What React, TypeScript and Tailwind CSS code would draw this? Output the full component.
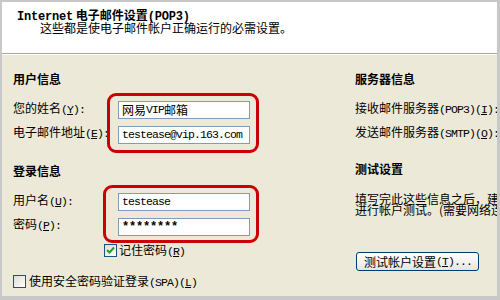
import type { ReactNode } from 'react';

/* Outlook Express 账户向导 — Internet 电子邮件设置 (POP3) */

function A({ children, bold }: { children: ReactNode; bold?: boolean }) {
  return (
    <span
      className={`font-['Liberation_Mono'] ${
        bold ? 'text-[12px] font-bold tracking-[-0.2px]' : 'text-[11.5px] font-normal tracking-[-0.9px]'
      }`}
    >
      {children}
    </span>
  );
}

function Key({ k, colon = true }: { k: string; colon?: boolean }) {
  return (
    <A>
      (<u>{k}</u>){colon ? ':' : ''}
    </A>
  );
}

function Campo({ children }: { children: ReactNode }) {
  return (
    <div className="flex h-[18px] w-[132px] items-center border border-[#7f9db9] bg-white pl-[3px] leading-[12px]">
      {children}
    </div>
  );
}

function Caixa({ marcada }: { marcada?: boolean }) {
  return (
    <span className="flex h-[13px] w-[13px] shrink-0 items-center justify-center border border-[#1c5180] bg-gradient-to-br from-[#dcdcd7] to-white">
      {marcada && (
        <svg width="9" height="9" viewBox="0 0 9 9" aria-hidden>
          <path d="M1 4 L3.5 6.5 L8 1.5" fill="none" stroke="#21a121" strokeWidth="2" />
        </svg>
      )}
    </span>
  );
}

export default function App() {
  return (
    <div className="flex h-[300px] w-[500px] flex-col overflow-hidden border-b-4 border-l-2 border-r-[3px] border-t-2 border-[#c8c8c8] bg-[#ece9d8] font-['Noto_Sans_CJK_SC',sans-serif] text-[12px] leading-[12px] text-black">
      {/* Cabeçalho branco */}
      <header className="h-[52px] shrink-0 border-b border-b-[#aca899] bg-white pl-[15px] pt-[7px] shadow-[0_1px_0_#ffffff]">
        <p className="h-[12px] font-bold">
          <A bold>Internet</A> 电子邮件设置<A bold>(POP3)</A>
        </p>
        <p className="mt-[1px] h-[12px] pl-[23px]">这些都是使电子邮件帐户正确运行的必需设置。</p>
      </header>

      <main className="mt-[1px] flex min-h-0 flex-1 overflow-hidden">
        {/* Coluna esquerda */}
        <div className="w-[353px] shrink-0 pl-[11px] pt-[18px]">
          <h2 className="h-[12px] font-bold">用户信息</h2>
          <div className="mt-[8px] flex">
            <div className="flex w-[94px] flex-col gap-[12px] pt-[9px]">
              <span className="h-[12px]">
                您的姓名<Key k="Y" />
              </span>
              <span className="h-[12px] whitespace-nowrap">
                电子邮件地址<Key k="E" />
              </span>
            </div>
            <div className="flex h-[60px] w-[152px] flex-col gap-[7px] rounded-[9px] border-[3px] border-[#cc0000] pl-[8px] pt-[5px]">
              <Campo>
                网易<A>VIP</A>邮箱
              </Campo>
              <Campo>
                <A>testease@vip.163.com</A>
              </Campo>
            </div>
          </div>

          <h2 className="mt-[12px] h-[12px] font-bold">登录信息</h2>
          <div className="mt-[8px] flex">
            <div className="flex w-[90px] flex-col gap-[12px] pt-[9px]">
              <span className="h-[12px]">
                用户名<Key k="U" />
              </span>
              <span className="h-[12px]">
                密码<Key k="P" />
              </span>
            </div>
            <div className="flex h-[58px] w-[156px] flex-col gap-[7px] rounded-[9px] border-[3px] border-[#cc0000] pl-[12px] pt-[5px]">
              <Campo>
                <A>testease</A>
              </Campo>
              <Campo>
                <A bold>********</A>
              </Campo>
            </div>
          </div>

          <label className="ml-[91px] mt-[1px] flex h-[13px] items-center gap-[2px]">
            <Caixa marcada />
            <span>
              记住密码<Key k="R" colon={false} />
            </span>
          </label>

          <label className="mt-[18px] flex h-[13px] items-center gap-[3px]">
            <Caixa />
            <span className="whitespace-nowrap">
              使用安全密码验证登录<A>(SPA)</A>
              <Key k="L" colon={false} />
            </span>
          </label>
        </div>

        {/* Coluna direita */}
        <div className="min-w-0 flex-1 overflow-hidden whitespace-nowrap pt-[18px]">
          <h2 className="h-[12px] font-bold">服务器信息</h2>
          <p className="mt-[17px] h-[12px]">
            接收邮件服务器<A>(POP3)</A>
            <Key k="I" />
          </p>
          <p className="mt-[12px] h-[12px]">
            发送邮件服务器<A>(SMTP)</A>
            <Key k="O" />
          </p>
          <h2 className="mt-[25px] h-[12px] font-bold">测试设置</h2>
          <p className="mt-[18px] leading-[11px]">
            填写完此这些信息之后，建议您单击下面的按钮
            <br />
            进行帐户测试。(需要网络连接)
          </p>
          <button className="ml-[1px] mt-[37px] flex h-[19px] w-[123px] items-center rounded-[3px] border border-[#003c74] bg-gradient-to-b from-white to-[#e6e5de] pl-[7px] text-left leading-[12px]">
            测试帐户设置<Key k="T" colon={false} />
            <A>...</A>
          </button>
        </div>
      </main>
    </div>
  );
}
